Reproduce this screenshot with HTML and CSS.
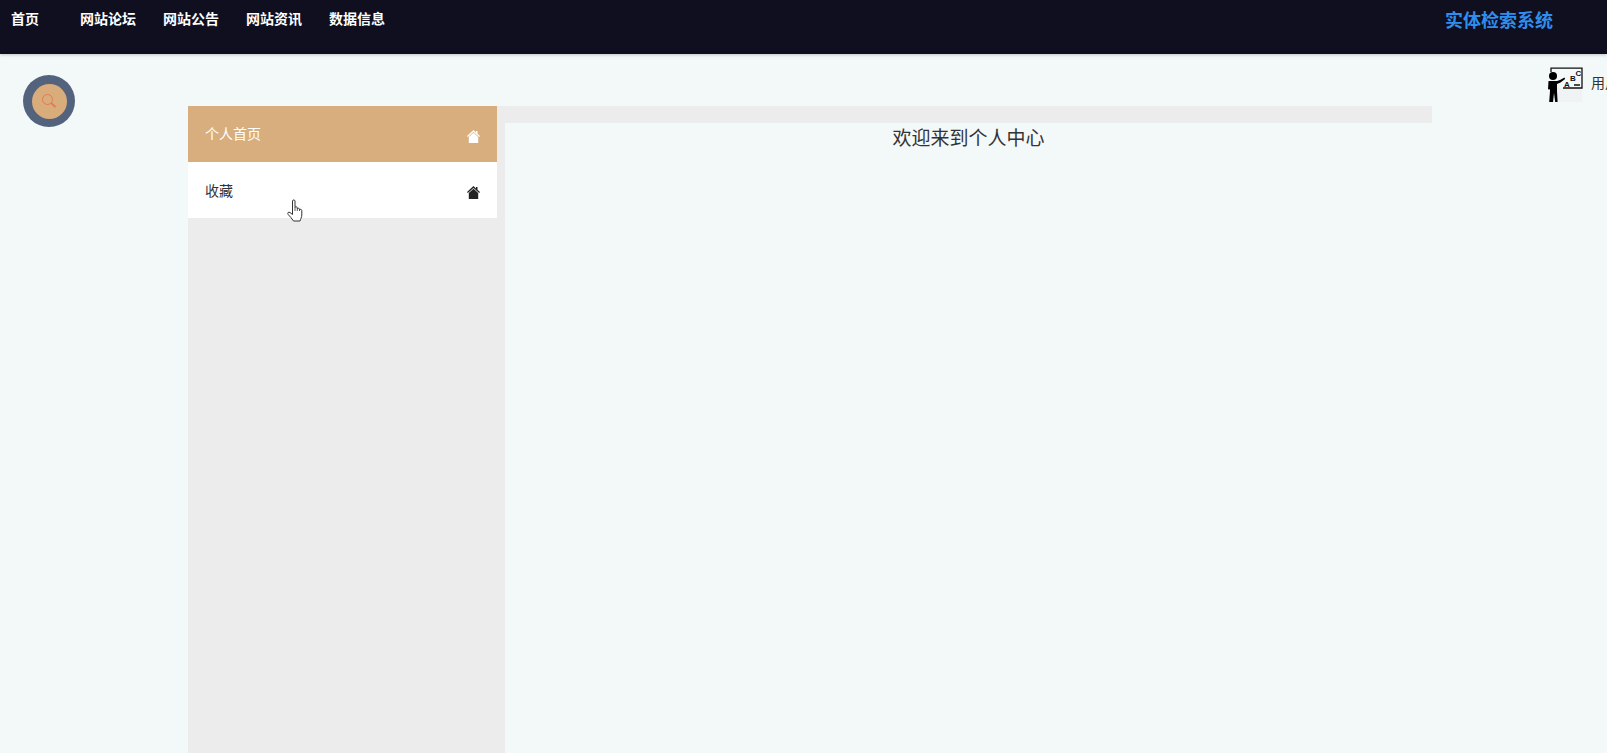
FILE: index.html
```html
<!DOCTYPE html>
<html lang="zh">
<head>
<meta charset="utf-8">
<title>实体检索系统</title>
<link rel="stylesheet" href="styles.css">
</head>
<body>
<header class="topbar">
  <nav class="nav">
    <a class="nav-item nav-home">首页</a>
    <a class="nav-item">网站论坛</a>
    <a class="nav-item">网站公告</a>
    <a class="nav-item">网站资讯</a>
    <a class="nav-item">数据信息</a>
  </nav>
  <div class="brand">实体检索系统</div>
</header>

<div class="search-fab">
  <div class="search-inner">
    <svg width="16" height="16" viewBox="0 0 16 16" fill="none" stroke="#e9774f" stroke-width="1"><circle cx="6.5" cy="6.5" r="5"/><path d="M10.2 10.2 14.5 14" stroke-width="1.8"/></svg>
  </div>
</div>

<div class="user">
  <svg class="user-icon" width="36" height="36" viewBox="0 0 36 36">
    <rect x="4" y="21" width="31" height="14" fill="#eff3f3"/>
    <path d="M4 5V1.200h31V21H16" fill="#f6f9f9" stroke="#111" stroke-width="1.300"/>
    <circle cx="6" cy="9" r="4" fill="#000"/>
    <path d="M1.500 14h8.500l3-1 4.500-2.500.6 1.500-4.600 3.500-3.500 1.500V24l.6 11H8.200L7 26l-1 9H2.200L3 24v-1.500l-2-.3z" fill="#000"/>
    <text x="17" y="20" class="bd-letter">A</text>
    <text x="23" y="14" class="bd-letter">B</text>
    <text x="28.500" y="9" class="bd-letter">C</text>
    <path d="M27 18h6" stroke="#111" stroke-width="1.500"/>
  </svg>
  <span class="user-label">用户</span>
</div>

<main class="layout">
  <aside class="side">
    <a class="side-item active">
      <span class="side-text">个人首页</span>
      <svg class="home" viewBox="0 0 13 13" width="13" height="13"><path d="M6.500 0 0 6l.8 1 5.700-5 5.700 5 .8-1-2.500-2.300V1H9v1.400z" fill="currentColor"/><path d="M1.800 7 6.500 2.800 11.200 7V13H1.800z" fill="currentColor"/></svg>
    </a>
    <a class="side-item">
      <span>收藏</span>
      <svg class="home" viewBox="0 0 13 13" width="13" height="13"><path d="M6.500 0 0 6l.8 1 5.700-5 5.700 5 .8-1-2.500-2.300V1H9v1.400z" fill="currentColor"/><path d="M1.800 7 6.500 2.800 11.200 7V13H1.800z" fill="currentColor"/></svg>
    </a>
  </aside>
  <section class="content">
    <h1 class="welcome">欢迎来到个人中心</h1>
  </section>
</main>

<svg class="cursor" width="16" height="24" viewBox="0 0 16 24">
  <path d="M5.500 2C5.500.6 8 .6 8 2V8.500C8 7.500 10.300 7.500 10.300 8.800V10C10.300 9 12.500 9 12.500 10.200V11C12.500 10 14.800 10 14.800 11.500V16C14.800 18.500 13.500 20 13 22H6.500C5 19.500 3 17.500 1.200 15.500 0 14 1.500 12.500 3 13.500L5.500 15.500Z" fill="#fff" stroke="#333" stroke-width="1"/>
  <path d="M8 8.500V12M10.300 10V12M12.500 11V12" fill="none" stroke="#333" stroke-width=".8"/>
</svg>
</body>
</html>
```
FILE: styles.css
```css
* { box-sizing: border-box; }
html, body { margin: 0; height: 100%; }
body {
  background: #f3f8f9;
  font-family: "Noto Sans CJK SC", "Liberation Sans", sans-serif;
  color: #333;
  overflow: hidden;
  position: relative;
}
.topbar {
  height: 54px;
  background: #0f0f20;
  box-shadow: 0 1px 3px rgba(0, 0, 0, .2);
  display: flex;
  justify-content: space-between;
  padding: 8px 54px 0 11px;
  align-items: flex-start;
}
.nav { display: flex; gap: 27px; }
.nav-item {
  color: #fff;
  font-size: 14px;
  font-weight: 700;
  line-height: 20px;
}
.nav-home { margin-right: 14px; }
.brand {
  color: #2f8eed;
  font-size: 18px;
  font-weight: 700;
  line-height: 22px;
}
.search-fab {
  position: absolute;
  left: 23px;
  top: 75px;
  width: 52px;
  height: 52px;
  border-radius: 50%;
  background: #53637d;
  display: flex;
  align-items: center;
  justify-content: center;
}
.search-inner {
  width: 35px;
  height: 35px;
  border-radius: 50%;
  background: #d9ac7c;
  display: flex;
  align-items: center;
  justify-content: center;
}
.user {
  position: absolute;
  left: 1547px;
  top: 67px;
  display: flex;
  align-items: flex-start;
  gap: 8px;
  white-space: nowrap;
}
.user-icon { display: block; }
.user-label { font-size: 14px; line-height: 20px; margin-top: 5px; color: #333; }
.bd-letter { font-family: "Liberation Sans", sans-serif; font-weight: 700; font-size: 8px; fill: #111; }
.layout {
  position: absolute;
  left: 188px;
  top: 106px;
  width: 1244px;
  bottom: 0;
  background: #ececec;
  display: flex;
  align-items: stretch;
  gap: 8px;
}
.side { width: 309px; display: flex; flex-direction: column; }
.side-item {
  height: 56px;
  display: flex;
  align-items: center;
  justify-content: space-between;
  padding: 0 17px 0 17px;
  background: #fff;
  font-size: 14px;
  color: #333;
}
.side-item.active { background: #d8ae7e; color: #fff; }
.side-text { margin-top: -2px; }
.home { display: block; color: #222; margin-top: 5px; }
.active .home { color: #fff; }
.content {
  flex: 1;
  margin-top: 17px;
  background: #f3f8f9;
}
.welcome {
  margin: 0;
  text-align: center;
  font-size: 19px;
  font-weight: 400;
  line-height: 30px;
  color: #333;
  position: relative;
  top: -1px;
}
.cursor { position: absolute; left: 287px; top: 199px; }
```
